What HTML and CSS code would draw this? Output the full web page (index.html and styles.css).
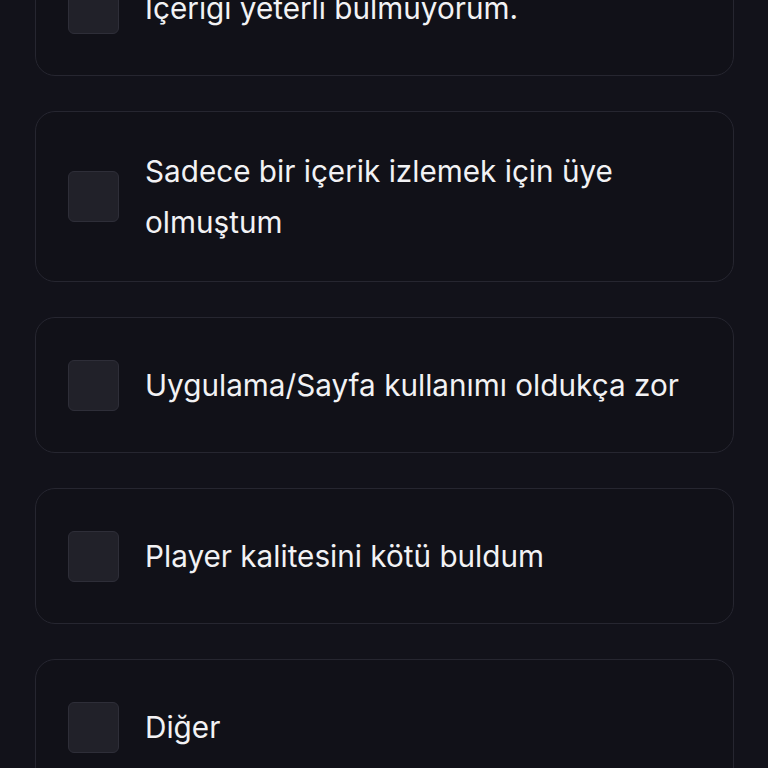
FILE: index.html
```html
<!DOCTYPE html>
<html lang="tr">
<head>
<meta charset="utf-8">
<title>Üyelik iptali</title>
<link rel="stylesheet" href="styles.css">
</head>
<body>
<main class="survey">
  <ul class="options">
    <li class="option"><span class="check"></span><span class="label">İçeriği yeterli bulmuyorum.</span></li>
    <li class="option"><span class="check"></span><span class="label">Sadece bir içerik izlemek için üye olmuştum</span></li>
    <li class="option"><span class="check"></span><span class="label">Uygulama/Sayfa kullanımı oldukça zor</span></li>
    <li class="option"><span class="check"></span><span class="label">Player kalitesini kötü buldum</span></li>
    <li class="option"><span class="check"></span><span class="label">Diğer</span></li>
  </ul>
</main>
</body>
</html>
```
FILE: styles.css
```css
html, body {
  margin: 0;
  padding: 0;
  background: #12121a;
  overflow: hidden;
}
body {
  font-family: Inter, "Noto Sans", "Liberation Sans", sans-serif;
  color: #f2f2f4;
}
.survey {
  padding: 0 34px 0 35px;
}
.options {
  list-style: none;
  margin: -60px 0 0 0;
  padding: 0;
  display: flex;
  flex-direction: column;
  gap: 35px;
}
.option {
  display: flex;
  align-items: center;
  gap: 26px;
  min-height: 66px;
  padding: 34px 32px;
  border: 1px solid #262630;
  border-radius: 20px;
  background: #111118;
}
.check {
  flex: 0 0 auto;
  width: 49px;
  height: 49px;
  border: 1px solid #2e2e38;
  border-radius: 6px;
  background: #212129;
}
.label {
  font-size: 29.7px;
  line-height: 50.5px;
  padding-right: 20px;
}
```
